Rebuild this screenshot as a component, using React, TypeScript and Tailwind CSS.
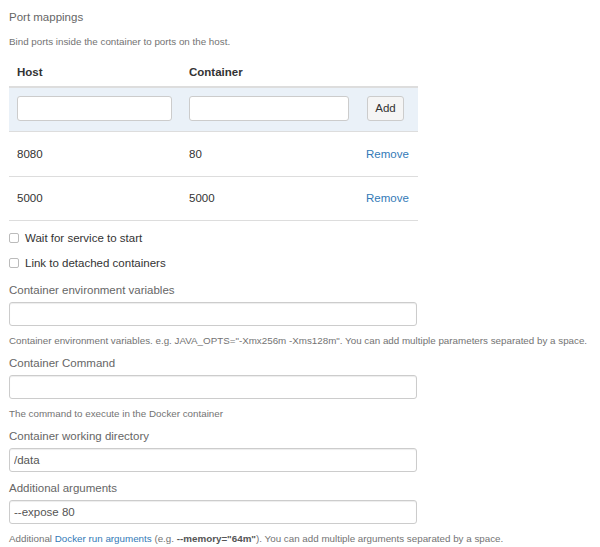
const font = { fontFamily: '"Liberation Sans", Arial, sans-serif' };

const mappings = [
  { host: "8080", container: "80" },
  { host: "5000", container: "5000" },
];

function Field({ label, value, help }: { label: string; value?: string; help?: React.ReactNode }) {
  return (
    <div className="mb-[9px]">
      <div className="text-[11.5px] leading-[14px] text-[#666] mb-[5px]">{label}</div>
      <input
        readOnly
        value={value ?? ""}
        className="block w-[408px] h-[24px] border border-[#ccc] rounded-[3px] px-[4px] text-[11.5px] text-[#555] bg-white shadow-[inset_0_1px_1px_rgba(0,0,0,0.075)] outline-none"
      />
      {help && <div className="mt-[8px] text-[9.8px] leading-[13px] text-[#737373] whitespace-nowrap">{help}</div>}
    </div>
  );
}

export default function App() {
  return (
    <div className="w-[600px] h-[547px] bg-white overflow-hidden pl-[9px] pt-[10px]" style={font}>
      <div className="text-[11.5px] leading-[14px] text-[#666]">Port mappings</div>
      <div className="mt-[12px] text-[9.8px] leading-[12px] text-[#737373]">
        Bind ports inside the container to ports on the host.
      </div>

      {/* Port table */}
      <div className="mt-[10px] w-[409px] text-[11.5px] text-[#333]">
        <div className="grid grid-cols-[172px_177px_1fr] border-b-2 border-[#ddd] font-bold leading-[14px]">
          <div className="pl-[8px] pt-[7px] pb-[7px]">Host</div>
          <div className="pl-[8px] pt-[7px] pb-[7px]">Container</div>
          <div />
        </div>
        <div className="grid grid-cols-[172px_177px_1fr] bg-[#eaf1f8] pt-[8px] pb-[10px]">
          <div className="pl-[8px]">
            <input readOnly className="block w-[155px] h-[25px] border border-[#ccc] rounded-[3px] bg-white outline-none" />
          </div>
          <div className="pl-[8px]">
            <input readOnly className="block w-[160px] h-[25px] border border-[#ccc] rounded-[3px] bg-white outline-none" />
          </div>
          <div className="pl-[9px]">
            <button className="h-[25px] w-[37px] border border-[#ccc] rounded-[3px] bg-[#f5f5f5] text-[#333] text-[11.5px]">
              Add
            </button>
          </div>
        </div>
        {mappings.map((m, i) => (
          <div
            key={m.host}
            className={`grid grid-cols-[172px_177px_1fr] items-center h-[45px] pt-[1px] border-t border-[#ddd] ${i === mappings.length - 1 ? "border-b" : ""}`}
          >
            <div className="pl-[8px]">{m.host}</div>
            <div className="pl-[8px]">{m.container}</div>
            <div className="pl-[8px] text-[#337ab7]">Remove</div>
          </div>
        ))}
      </div>

      {/* Checkboxes */}
      <div className="mt-[10px] text-[11.5px] leading-[14px] text-[#333]">
        <label className="flex items-center gap-[6px]">
          <span className="w-[10px] h-[10px] border border-[#bbb] rounded-[2px] bg-white" />
          Wait for service to start
        </label>
        <label className="flex items-center gap-[6px] mt-[11px]">
          <span className="w-[10px] h-[10px] border border-[#bbb] rounded-[2px] bg-white" />
          Link to detached containers
        </label>
      </div>

      <div className="mt-[13px]">
        <Field
          label="Container environment variables"
          help={
            <>
              Container environment variables. e.g. JAVA_OPTS="-Xmx256m -Xms128m". You can add multiple parameters
              separated by a space.
            </>
          }
        />
        <Field label="Container Command" help="The command to execute in the Docker container" />
        <Field label="Container working directory" value="/data" />
        <Field
          label="Additional arguments"
          value="--expose 80"
          help={
            <>
              Additional <span className="text-[#337ab7]">Docker run arguments</span> (e.g.{" "}
              <b className="text-[#555]">--memory="64m"</b>). You can add multiple arguments separated by a space.
            </>
          }
        />
      </div>
    </div>
  );
}
